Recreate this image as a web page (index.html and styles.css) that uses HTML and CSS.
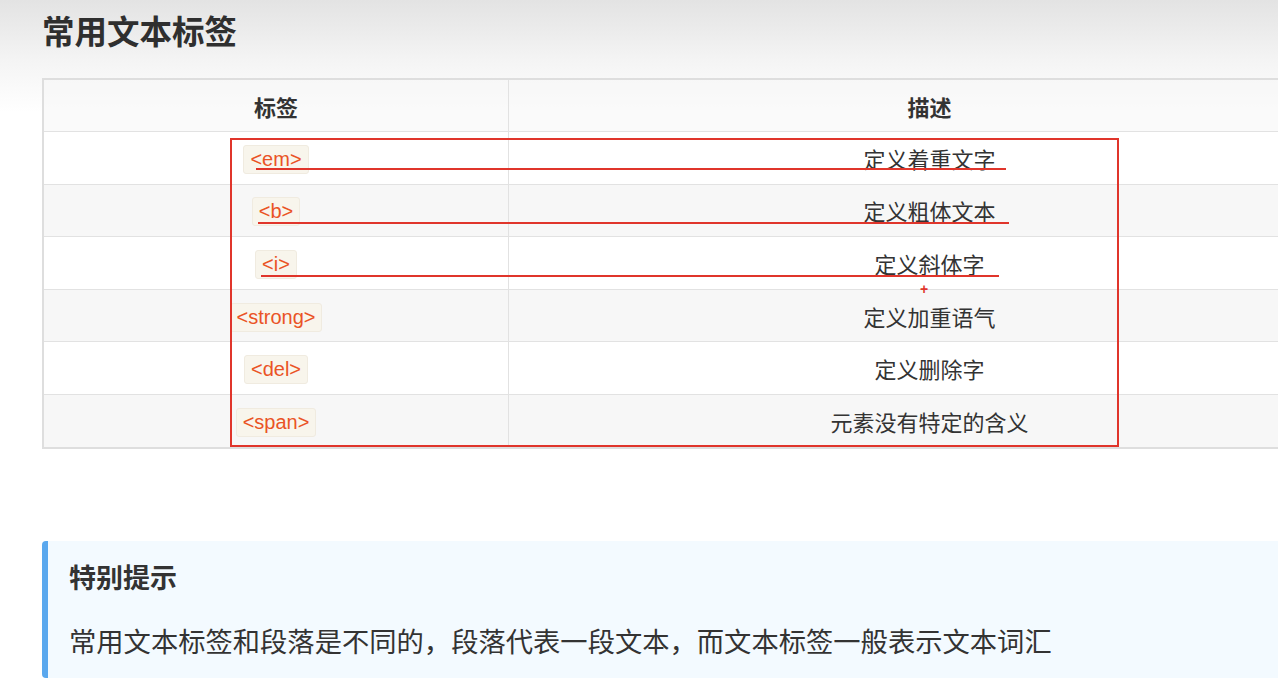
FILE: index.html
```html
<!DOCTYPE html>
<html lang="zh-CN">
<head>
<meta charset="utf-8">
<title>常用文本标签</title>
<link rel="stylesheet" href="styles.css">
</head>
<body>
<div class="page">
  <h1 class="title">常用文本标签</h1>
  <table class="tags">
    <thead>
      <tr><th class="col-tag">标签</th><th>描述</th></tr>
    </thead>
    <tbody>
      <tr><td class="cell-tag"><code class="tag">&lt;em&gt;</code></td><td>定义着重文字</td></tr>
      <tr><td class="cell-tag"><code class="tag">&lt;b&gt;</code></td><td>定义粗体文本</td></tr>
      <tr><td class="cell-tag"><code class="tag">&lt;i&gt;</code></td><td>定义斜体字</td></tr>
      <tr><td class="cell-tag"><code class="tag">&lt;strong&gt;</code></td><td>定义加重语气</td></tr>
      <tr><td class="cell-tag"><code class="tag">&lt;del&gt;</code></td><td>定义删除字</td></tr>
      <tr><td class="cell-tag"><code class="tag">&lt;span&gt;</code></td><td>元素没有特定的含义</td></tr>
    </tbody>
  </table>

  <div class="tip">
    <div class="tip-title">特别提示</div>
    <p class="tip-text">常用文本标签和段落是不同的，段落代表一段文本，而文本标签一般表示文本词汇</p>
  </div>

  <div class="mark mark-box"></div>
  <div class="mark mark-line l1"></div>
  <div class="mark mark-line l2"></div>
  <div class="mark mark-line l3"></div>
  <div class="mark mark-plus">+</div>
</div>
</body>
</html>
```

FILE: styles.css
```css
html, body {
  margin: 0;
  padding: 0;
  overflow: hidden;
}
body {
  background: #fff linear-gradient(#e3e3e3 0, #f4f4f4 60px, #ffffff 112px) no-repeat;
  background-size: 100% 120px;
  font-family: "Noto Sans CJK SC", "Liberation Sans", sans-serif;
  color: #333;
}
.page {
  position: relative;
  padding-left: 42px;
  width: 1310px;
}
.title {
  margin: 0;
  font-size: 32.5px;
  line-height: 60px;
  font-weight: 700;
  color: #2f2f2f;
}
.tags {
  margin-top: 18px;
  width: 1310px;
  border-collapse: collapse;
  border: 2px solid #dedede;
  font-size: 22px;
}
.tags th, .tags td {
  border: 1px solid #e2e2e2;
  text-align: center;
  padding: 0;
}
.tags th {
  height: 51px;
  font-weight: 700;
  background: rgba(246, 246, 246, 0.6);
}
.tags td {
  height: 51.6px;
  color: #333;
}
.tags .cell-tag {
  line-height: 0;
  padding-top: 3px;
  height: 48.6px;
}
.tags .col-tag {
  width: 464px;
}
.tags tbody tr:nth-child(odd) td {
  background: #fff;
}
.tags tbody tr:nth-child(even) td {
  background: #f7f7f7;
}
.tag {
  display: inline-block;
  font-family: "Liberation Sans", Arial, sans-serif;
  font-size: 20px;
  line-height: 23px;
  padding: 2px 6px 2px;
  color: #ea5325;
  background: #f8f5ec;
  border: 1px solid #f0ebe0;
  border-radius: 3px;
}
.tip {
  margin-top: 92px;
  width: 1300px;
  background: #f3faff;
  border-left: 6px solid #5aa8ee;
  border-radius: 4px;
  padding: 19px 0 14px 21px;
  height: 104px;
}
.tip-title {
  font-size: 27px;
  font-weight: 700;
  line-height: 34px;
  color: #333;
}
.tip-text {
  margin: 29px 0 0;
  font-size: 27.3px;
  line-height: 34px;
  color: #333;
}
.mark {
  position: absolute;
}
.mark-box {
  left: 230px;
  top: 138px;
  width: 885px;
  height: 305px;
  border: 2px solid #e0352b;
}
.mark-line {
  height: 2px;
  background: #e0352b;
}
.l1 { left: 256px; top: 168px; width: 750px; }
.l2 { left: 258px; top: 222px; width: 751px; }
.l3 { left: 261px; top: 275px; width: 738px; }
.mark-plus {
  left: 920px;
  top: 281px;
  font-family: "Liberation Sans", sans-serif;
  font-size: 14px;
  font-weight: 700;
  color: #e0352b;
  line-height: 16px;
}
```
